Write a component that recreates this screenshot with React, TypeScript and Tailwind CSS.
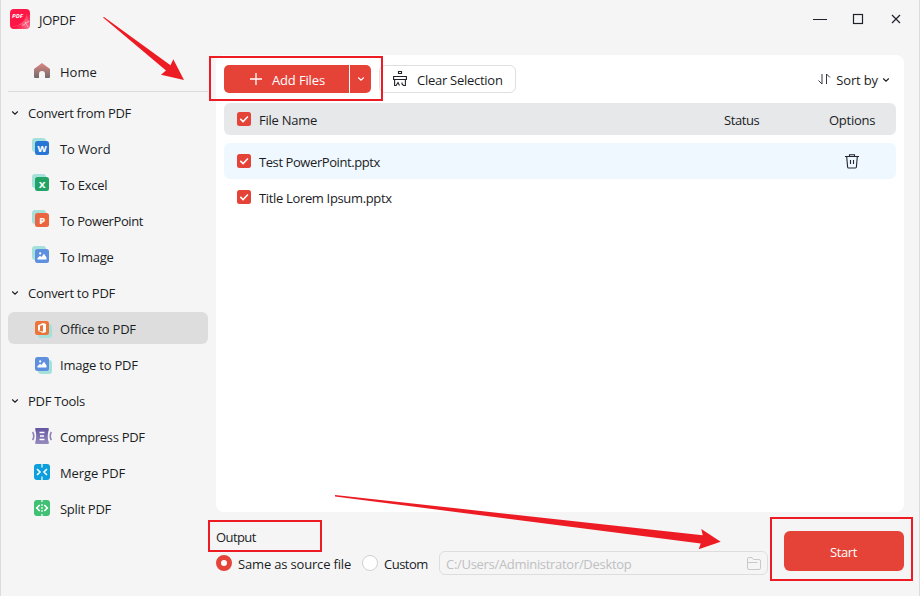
import React from 'react';

type Kind = 'word' | 'excel' | 'ppt' | 'image' | 'office' | 'imagepdf' | 'compress' | 'merge' | 'split';

function Chevron({ className = '' }: { className?: string }) {
  return (
    <svg width="8" height="6" viewBox="0 0 8 6" className={className} fill="none" stroke="currentColor" strokeWidth="1.100">
      <path d="M1.200 1.500 4 4.200 6.800 1.500" />
    </svg>
  );
}

function Picture() {
  return (
    <>
      <circle cx="5.2" cy="4.4" r="1.1" fill="#fff" />
      <path d="M2.4 10.4V9.2L5 6.8l1.400 1.300L9 4.800l2.500 3.600v2Z" fill="#fff" />
    </>
  );
}

function ItemIcon({ kind }: { kind: Kind }) {
  if (kind === 'compress') {
    return (
      <svg width="20" height="18" viewBox="0 0 20 18" fill="none">
        <defs>
          <linearGradient id="cp" x1="0" y1="0" x2="0" y2="1">
            <stop stopColor="#6554a0" />
            <stop offset="1" stopColor="#968bbd" />
          </linearGradient>
        </defs>
        <path d="M3.300 1h13.400v2.400c-1.200 2-1.200 9.200 0 11.200V17H3.300v-2.400c1.200-2 1.200-9.200 0-11.200Z" fill="url(#cp)" />
        <path d="M7.500 5.500h5M8 9h4M7.500 12.500h5" stroke="#fff" strokeWidth="1.300" />
        <path d="M.5 5c1.700 2 1.700 6 0 8M19.500 5c-1.700 2-1.700 6 0 8" stroke="#8c81b6" strokeWidth="1.600" />
      </svg>
    );
  }
  if (kind === 'merge' || kind === 'split') {
    const merge = kind === 'merge';
    return (
      <svg width="20" height="18" viewBox="0 0 20 18" fill="none">
        <rect x="2" y="1" width="16" height="16" rx="3" fill={merge ? '#0b9fdc' : '#3fc073'} />
        <path d={merge ? 'M10 1v3.500M10 13.500V17' : 'M10 1v2M10 5v2M10 8v2M10 11v2M10 15v2'} stroke="#f5f5f5" strokeWidth="1.300" />
        <path
          d={merge ? 'M5 6l3 3-3 3M15 6l-3 3 3 3' : 'M7.700 6 4.700 9l3 3M12.300 6l3 3-3 3'}
          stroke="#fff"
          strokeWidth="1.600"
        />
      </svg>
    );
  }
  const reversed = kind === 'office' || kind === 'imagepdf';
  const color = { word: '#2877d7', excel: '#21a366', ppt: '#eb6640', image: '#5e90df', office: '#ec7439', imagepdf: '#5e90df' }[kind];
  const letter = { word: 'W', excel: 'X', ppt: 'P', image: '', office: '', imagepdf: '' }[kind];
  return (
    <svg width="20" height="18" viewBox="0 0 20 18">
      <rect x={reversed ? 6 : 0} y={reversed ? 4 : 0} width="14" height="14" rx="3" fill="#a5e1da" />
      <g transform={reversed ? 'translate(3 1)' : 'translate(3 3)'}>
        <rect width="14" height="14" rx="2.500" fill={color} />
        {letter && (
          <text x="7.200" y="10.600" textAnchor="middle" fill="#fff" stroke="#fff" strokeWidth=".15" fontSize="9.500" fontWeight="700" fontFamily="Open Sans, sans-serif">
            {letter}
          </text>
        )}
        {(kind === 'image' || kind === 'imagepdf') && <Picture />}
        {kind === 'office' && (
          <path d="M3 10V4.200L8 2l3 .9v8.200l-3 .9-5-2 5 .5V4L5 4.800v4.400Z" fill="#fff" />
        )}
      </g>
    </svg>
  );
}

function Group({ label, tracking }: { label: string; tracking: string }) {
  return (
    <div className="flex h-9 items-center pl-[3px]">
      <Chevron />
      <span className={`ml-[9px] ${tracking}`}>{label}</span>
    </div>
  );
}

const iconShift: Partial<Record<Kind, string>> = {
  word: '-translate-y-0.5',
  excel: '-translate-y-0.5',
  ppt: '-translate-y-0.5',
  image: '-translate-y-0.5',
  compress: '-translate-y-px',
  merge: '-translate-y-px',
  split: '-translate-y-px',
};

function Item({ kind, label, tracking, active = false }: { kind: Kind; label: string; tracking: string; active?: boolean }) {
  return (
    <div className={active ? 'flex h-9 items-start pt-px' : 'flex h-9 items-center'}>
      <div className={active ? 'flex h-8 w-full items-center rounded-md bg-[#dddddd] pt-0.5 pl-6' : 'flex h-8 w-full items-center pl-6'}>
        <span className={iconShift[kind]}><ItemIcon kind={kind} /></span>
        <span className={`ml-2 ${tracking}`}>{label}</span>
      </div>
    </div>
  );
}

function Check() {
  return (
    <svg width="14" height="14" viewBox="0 0 14 14" className="-translate-y-px">
      <rect width="14" height="14" rx="2.500" fill="#e64338" />
      <path d="m3.300 6.900 2.800 2.700 4.800-5" fill="none" stroke="#fff" strokeWidth="1.500" />
    </svg>
  );
}

function Trash() {
  return (
    <svg width="14" height="15" viewBox="0 0 14 15" fill="none" stroke="#222530" strokeWidth="1.100" className="-translate-y-px">
      <path d="M0 2.500h14M4.500 2.300V.7h5v1.600M1.700 2.800 2.600 13q.1 1 1 1h6.800q.9 0 1-1l.9-10.200M5.500 6v4M8.500 6v4" />
    </svg>
  );
}

export default function App() {
  return (
    <div className="relative flex h-[596px] w-[920px] flex-col overflow-hidden border-x border-[#dcdcdc] bg-[#f5f5f5] font-['Open_Sans',sans-serif] text-[13px] leading-5 whitespace-nowrap text-[#1b1d25]">
      <header className="flex h-10 items-center pr-[18px] pl-[9px]">
        <svg width="20" height="20" viewBox="0 0 20 20" className="-translate-y-px">
          <defs>
            <linearGradient id="logo" x1="0" y1="0" x2="1" y2="1">
              <stop stopColor="#ff174a" />
              <stop offset=".6" stopColor="#ff1645" />
              <stop offset="1" stopColor="#ff7592" />
            </linearGradient>
          </defs>
          <rect width="20" height="20" rx="4" fill="url(#logo)" />
          <path d="M1 18Q15 16 17 4q0 7 3 9-4 0-5 6-1-4-5-3Q6 18 1 18Z" fill="#ff8da3" opacity=".45" />
          <path d="m12 17 7-5M15 13l3 5" stroke="#ffd0d9" strokeWidth=".7" />
          <text x="2" y="9" fill="#fff" fontSize="6" fontWeight="700" fontStyle="italic" fontFamily="Open Sans, sans-serif">PDF</text>
        </svg>
        <span className="ml-[9px] tracking-[-0.3px]">JOPDF</span>
        <svg width="88" height="12" viewBox="0 0 88 12" className="ml-auto -translate-y-px" fill="none" stroke="#20222b">
          <path d="M0 6.500h14" />
          <rect x="40.500" y="1.500" width="9" height="9" strokeWidth="1.200" />
          <path d="m79 2 8 8M87 2l-8 8" strokeWidth="1.200" />
        </svg>
      </header>
      <div className="flex h-[472px] pl-[7px]">
        <nav className="w-[200px] pt-3.5">
          <div className="flex h-[38px] items-center border-b border-[#dddddd] pb-0.5 pl-[26px]">
            <svg width="16" height="15" viewBox="0 0 16 15" className="-translate-y-px">
              <defs>
                <linearGradient id="home" x1="0" y1="0" x2="0" y2="1">
                  <stop stopColor="#df8582" />
                  <stop offset="1" stopColor="#716b6c" />
                </linearGradient>
              </defs>
              <path d="M8 0 16 6v8q0 1-1 1h-4v-4a3 3 0 0 0-6 0v4H1q-1 0-1-1V6Z" fill="url(#home)" />
            </svg>
            <span className="ml-2.5">Home</span>
          </div>
          <div className="pt-[3px]">
            <Group label="Convert from PDF" tracking="tracking-[-0.31px]" />
            <Item kind="word" label="To Word" tracking="tracking-[-0.14px]" />
            <Item kind="excel" label="To Excel" tracking="tracking-[-0.22px]" />
            <Item kind="ppt" label="To PowerPoint" tracking="tracking-[-0.4px]" />
            <Item kind="image" label="To Image" tracking="tracking-[-0.25px]" />
            <Group label="Convert to PDF" tracking="tracking-[-0.28px]" />
            <Item kind="office" label="Office to PDF" tracking="tracking-[-0.23px]" active />
            <Item kind="imagepdf" label="Image to PDF" tracking="tracking-[-0.23px]" />
            <Group label="PDF Tools" tracking="tracking-[-0.3px]" />
            <Item kind="compress" label="Compress PDF" tracking="tracking-[-0.3px]" />
            <Item kind="merge" label="Merge PDF" tracking="tracking-[-0.1px]" />
            <Item kind="split" label="Split PDF" tracking="tracking-[-0.3px]" />
          </div>
        </nav>
        <main className="mt-[15px] ml-2 h-[457px] w-[688px] rounded-lg bg-white px-2 pt-2.5">
          <div className="flex h-7 items-center">
            <div className="flex h-7 w-[147px] overflow-hidden rounded-[5px] bg-white text-white">
              <button className="flex w-[125px] items-center bg-[#e64338] pt-0.5 pl-[26px]">
                <svg width="12" height="12" viewBox="0 0 12 12" stroke="currentColor" strokeWidth="1.300" className="-translate-y-px"><path d="M6 0v12M0 6h12" /></svg>
                <span className="ml-2.5 tracking-[-0.15px]">Add Files</span>
              </button>
              <span className="ml-px flex w-[21px] items-center justify-center bg-[#e64338]"><Chevron /></span>
            </div>
            <button className="ml-2 flex h-7 w-[137px] items-center rounded-md border border-[#dfdfdf] pt-0.5 pl-[13px]">
              <svg width="14" height="16" viewBox="0 0 14 16" fill="none" stroke="#202229" strokeWidth="1.100" className="-translate-y-px">
                <path d="M5.500.5h3v2h-3ZM.6 5.500h12.800v3H.6ZM1.600 8.500v6h1.500l1.900-3 1.500 3M9 11.500v1.500l1.500 1.500h1.900v-6" />
              </svg>
              <span className="ml-2.5 tracking-[-0.27px]">Clear Selection</span>
            </button>
            <div className="ml-auto flex items-center pr-1.5 pt-0.5">
              <svg width="13" height="12" viewBox="0 0 13 12" fill="none" stroke="#343742" className="-translate-y-px">
                <path d="M4 1v10L.500 7.500M8.500 11V1L12 4.500" />
              </svg>
              <span className="ml-[5px] mr-1 tracking-[-0.15px]">Sort by</span><Chevron />
            </div>
          </div>
          <div className="mt-2.5 flex h-8 items-center rounded-md bg-[#e7e8ea] pt-0.5 pl-[13px]">
            <Check /><span className="ml-2 w-[465px] tracking-[-0.25px]">File Name</span><span className="w-[105px] tracking-[-0.4px]">Status</span><span className="tracking-[-0.27px]">Options</span>
          </div>
          <div className="mt-2 flex h-9 items-center rounded-md bg-[#f0f8ff] pt-0.5 pl-[13px]">
            <Check /><span className="ml-2 w-[586px] tracking-[-0.42px]">Test PowerPoint.pptx</span><Trash />
          </div>
          <div className="flex h-9 items-center pt-0.5 pl-[13px]"><Check /><span className="ml-2 tracking-[-0.34px]">Title Lorem Ipsum.pptx</span></div>
        </main>
      </div>
      <footer className="flex h-[84px] pl-[215px]">
        <section className="w-[568px] pt-[15px]">
          <div className="h-5 tracking-[-0.6px]">Output</div>
          <div className="mt-1 flex h-6 items-center">
            <span className="h-4 w-4 rounded-full border-5 border-[#e64338] bg-white" />
            <span className="ml-1.5 w-[124px] pt-0.5 tracking-[-0.17px]">Same as source file</span>
            <span className="h-4 w-4 rounded-full border border-[#d1d1d1] bg-white" />
            <span className="ml-1.5 w-[55px] pt-0.5 tracking-[-0.5px]">Custom</span>
            <div className="flex h-6 w-[329px] items-center rounded-md border border-[#dddddd] pr-1.5 pl-1.5 text-[#bfc0c2]">
              <span className="pt-0.5 tracking-[-0.3px]">C:/Users/Administrator/Desktop</span>
              <svg width="14" height="13" viewBox="0 0 14 13" className="ml-auto" fill="none" stroke="#c9c9c9"><path d="M.5 11V2Q.5.5 2 .5h3l1.500 2H12q1.500 0 1.500 1.500v7q0 1.500-1.500 1.500H2Q.5 12.500.5 11ZM.5 5.500h10" /></svg>
            </div>
          </div>
        </section>
        <button className="mt-[19px] h-10 w-[120px] rounded-md bg-[#e64338] pt-0.5 pr-px tracking-[-0.35px] text-white">Start</button>
      </footer>
      <svg className="pointer-events-none absolute top-0 -left-px" width="920" height="596" viewBox="0 0 920 596">
        <g fill="none" stroke="#ed1c24" strokeWidth="2">
          <path d="M210 57H382V100H210ZM209 521H321V551H209ZM771 518H912V580H771Z" />
        </g>
        <path d="M103 17.500 104 17 170.500 65.300 173.300 59.300 184 80 161 74.700 166 70.500ZM335 495 702.700 535.300 701.300 529 720.700 541.700 698.700 549.300 700.700 543.500 335 496.500Z" fill="#ed1c24" />
      </svg>
    </div>
  );
}
